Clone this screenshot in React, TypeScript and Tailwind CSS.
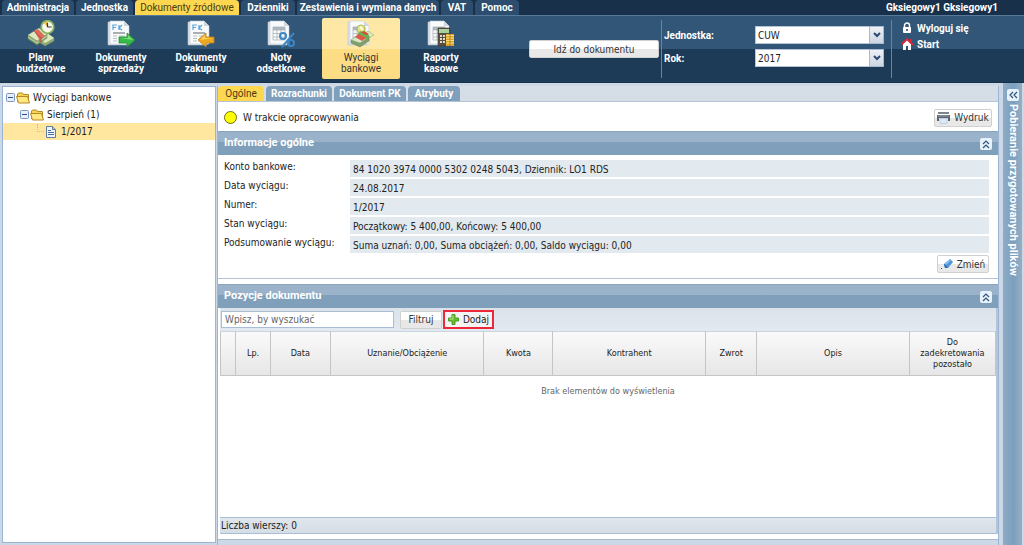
import { useState } from 'react';
import type { ReactNode } from 'react';
import clsx from 'clsx';

const menuItems = [
  { label: 'Administracja', width: 'w-[72px]' },
  { label: 'Jednostka', width: 'w-[57px]' },
  { label: 'Dokumenty źródłowe', width: 'w-[104px]' },
  { label: 'Dzienniki', width: 'w-[54px]' },
  { label: 'Zestawienia i wymiana danych', width: 'w-[142px]' },
  { label: 'VAT', width: 'w-[32px]' },
  { label: 'Pomoc', width: 'w-[44px]' },
];

const tabs = [
  { label: 'Ogólne', width: 'w-[46px]' },
  { label: 'Rozrachunki', width: 'w-[66px]' },
  { label: 'Dokument PK', width: 'w-[72px]' },
  { label: 'Atrybuty', width: 'w-[52px]' },
];

const details = [
  { label: 'Konto bankowe:', value: '84 1020 3974 0000 5302 0248 5043, Dziennik: LO1 RDS' },
  { label: 'Data wyciągu:', value: '24.08.2017' },
  { label: 'Numer:', value: '1/2017' },
  { label: 'Stan wyciągu:', value: 'Początkowy: 5 400,00, Końcowy: 5 400,00' },
  { label: 'Podsumowanie wyciągu:', value: 'Suma uznań: 0,00, Suma obciążeń: 0,00, Saldo wyciągu: 0,00' },
];

const columns = [
  { label: '', width: 'w-[2%]' },
  { label: 'Lp.', width: 'w-[4.4%]' },
  { label: 'Data', width: 'w-[7.8%]' },
  { label: 'Uznanie/Obciążenie', width: 'w-[19.8%]' },
  { label: 'Kwota', width: 'w-[8.9%]' },
  { label: 'Kontrahent', width: 'w-[19.7%]' },
  { label: 'Zwrot', width: 'w-[6.6%]' },
  { label: 'Opis', width: 'w-[19.7%]' },
  { label: 'Do zadekretowania pozostało', width: 'w-[11.1%]' },
];

function Sheet({ fk = false }: { fk?: boolean }) {
  return (
    <g>
      <path d="M1 2h15l4 4v19H1z" fill="#dfe5ea" stroke="#b5c0ca" strokeWidth=".6" />
      <path d="M3 1h14l5 5v18H3z" fill="#f9fafb" stroke="#c3ccd4" strokeWidth=".6" />
      <path d="M17 1v5h5z" fill="#cfd7df" />
      {fk ? (
        <g>
          <path d="M6 10V5h4M6 7.500h3M12 5v5M15 5l-3 3 3 2" fill="none" stroke="#5aa3d8" strokeWidth="1.200" />
          <path d="M6 12h12v2H6z" fill="#a9aeb3" />
          <path d="M6 16h4M6 18.500h4M6 21h4M12 16h6M12 18.500h6M12 21h6" stroke="#b9bfc5" strokeWidth="1" />
        </g>
      ) : (
        <g>
          <path d="M6 7h12v3H6z" fill="#b3bac1" />
          <path d="M6 7h12v13H6zM6 10h12M6 13.500h12M6 17h12M10 7v13M14 7v13" fill="none" stroke="#a4adb6" strokeWidth=".7" />
        </g>
      )}
    </g>
  );
}

function Cash() {
  return (
    <g strokeLinejoin="round">
      <path d="M10 17l10-4 7 5v3l-9 5-8-5z" fill="#8fae75" stroke="#6c8659" strokeWidth=".5" />
      <path d="M10 17l10-4 7 5-9 5z" fill="#dce8bf" />
      <path d="M1 15v4l9 6 10-7v-4l-10 7z" fill="#86a56c" stroke="#637d50" strokeWidth=".5" />
      <path d="M1 15L12 8l8 6-10 7z" fill="#dce9c4" stroke="#92a879" strokeWidth=".5" />
      <path d="M1 17l9 6 10-7" fill="none" stroke="#e3edcf" strokeWidth=".7" />
      <path d="M7 11l4-2 7 7-4 3v3l-2 1v-4z" fill="#dc6b5c" />
      <path d="M7 11l7 7v4" fill="none" stroke="#b34239" strokeWidth=".8" />
    </g>
  );
}

function BudgetIcon() {
  return (
    <svg className="size-7" viewBox="0 0 28 28" aria-hidden="true">
      <Cash />
      <circle cx="20.500" cy="7" r="6.300" fill="#f8f7eb" stroke="#8bb35c" strokeWidth="1.800" />
      <path d="M20.500 7L17 3a5 5 0 0 1 4-1z" fill="#f1b63b" />
      <path d="M20.500 7V3M20.500 7h4" stroke="#343434" strokeWidth="1.200" />
    </svg>
  );
}

function SalesIcon() {
  return (
    <svg className="size-7" viewBox="0 0 28 28" aria-hidden="true">
      <Sheet fk />
      <path d="M12 17h8v-4l8 7-8 7v-4h-8z" fill="#36ba49" stroke="#228f34" strokeWidth=".8" />
      <path d="M13 18h8v-3l5 5z" fill="#7edb79" />
    </svg>
  );
}

function PurchaseIcon() {
  return (
    <svg className="size-7" viewBox="0 0 28 28" aria-hidden="true">
      <Sheet fk />
      <path d="M27 17h-8v-4l-8 7 8 7v-4h8z" fill="#eda821" stroke="#c57f14" strokeWidth=".8" />
      <path d="M26 18h-8v-3l-5 5z" fill="#ffd658" />
    </svg>
  );
}

function InterestIcon() {
  return (
    <svg className="size-7" viewBox="0 0 28 28" aria-hidden="true">
      <Sheet />
      <g fill="none" stroke="#3c86c5" strokeWidth="2">
        <circle cx="16" cy="16" r="3" />
        <circle cx="24" cy="23" r="3" />
        <path d="M27 13L15 27" />
      </g>
    </svg>
  );
}

function StatementIcon() {
  return (
    <svg className="size-7" viewBox="0 0 28 28" aria-hidden="true">
      <Sheet />
      <circle cx="14" cy="9" r="4" fill="#e6e48c" stroke="#b6bb4a" />
      <path d="M14 9V6M14 9h2" stroke="#fff" strokeWidth="1.300" />
      <path d="M13 15l8-4 6 4-8 5z" fill="#d9ebc4" stroke="#8fb577" strokeWidth=".6" />
      <path d="M4 20v3l9 4 9-6v-4l-9 6z" fill="#7f9f6b" stroke="#627d52" strokeWidth=".5" />
      <path d="M4 20l9-6 9 3-9 6z" fill="#dbeac6" stroke="#7f9f6e" strokeWidth=".6" />
      <path d="M10 15l3-4 7 2 3 4-4 2z" fill="#6cb04f" />
      <path d="M8 17l4-3 7 4-4 3z" fill="#df5747" />
      <path d="M14 12l5 3 3-1-5-3z" fill="#da4a38" />
    </svg>
  );
}

function CashReportIcon() {
  return (
    <svg className="size-7" viewBox="0 0 28 28" aria-hidden="true">
      <Sheet />
      <path d="M11 8h12v18H11z" fill="#5a5040" stroke="#3d3931" strokeWidth=".6" />
      <path d="M12 9h10v4H12z" fill="#a8d29b" />
      <path d="M13 15h2v2h-2zM16 15h2v2h-2zM19 15h2v2h-2zM13 18h2v2h-2zM16 18h2v2h-2zM19 18h2v2h-2zM13 21h2v2h-2zM16 21h2v2h-2z" fill="#e3dcc6" />
      <path d="M19 14h8v12h-8z" fill="#dda42b" />
      <path d="M19 15.500h8M19 18h8M19 20.500h8M19 23h8" stroke="#ffe581" strokeWidth="1" />
      <path d="M23 14v12" stroke="#a87413" strokeWidth=".8" />
    </svg>
  );
}

const tools = [
  { label: 'Plany budżetowe', icon: <BudgetIcon /> },
  { label: 'Dokumenty sprzedaży', icon: <SalesIcon /> },
  { label: 'Dokumenty zakupu', icon: <PurchaseIcon /> },
  { label: 'Noty odsetkowe', icon: <InterestIcon /> },
  { label: 'Wyciągi bankowe', icon: <StatementIcon />, active: true },
  { label: 'Raporty kasowe', icon: <CashReportIcon /> },
];

function LockIcon() {
  return (
    <svg className="size-3" viewBox="0 0 12 12" aria-hidden="true">
      <path d="M3.500 6V3.500a2.500 2.500 0 0 1 5 0V6" fill="none" stroke="#fff" strokeWidth="1.500" />
      <rect x="2" y="5" width="8" height="6" rx="1" fill="#fff" />
      <path d="M6 7v2" stroke="#26405c" strokeWidth="1.500" />
    </svg>
  );
}

function HomeIcon() {
  return (
    <svg className="size-3" viewBox="0 0 12 12" aria-hidden="true">
      <path d="M2 6l4-4 4 4v6H7V8H5v4H2z" fill="#fff" />
      <path d="M0 7l6-6 6 6" fill="none" stroke="#dc2738" strokeWidth="1.800" />
      <path d="M9 1h1.500v3H9z" fill="#dc2738" />
    </svg>
  );
}

function FolderIcon() {
  return (
    <svg className="h-3 w-[14px]" viewBox="0 0 14 12" aria-hidden="true">
      <path d="M1.500 10V2l1-1h4l1 1.500h5V10" fill="#f7d253" stroke="#b58a26" />
      <path d="M.5 4.500h11l2 6.500h-11z" fill="#ffe782" stroke="#b58a26" />
    </svg>
  );
}

function FileIcon() {
  return (
    <svg className="h-3 w-[14px]" viewBox="0 0 14 12" aria-hidden="true">
      <path d="M2.500.5h6l3 3v8h-9z" fill="#eef4fb" stroke="#5f7c9e" />
      <path d="M8.500.5v3h3" fill="#a8bfdb" stroke="#5f7c9e" />
      <path d="M4 4.500h3M4 6.500h6M4 8.500h6" stroke="#4a6c98" />
    </svg>
  );
}

function MinusBox() {
  return (
    <svg className="size-[9px]" viewBox="0 0 9 9" aria-hidden="true">
      <rect x=".5" y=".5" width="8" height="8" rx="1" fill="#e8effa" stroke="#7994bd" />
      <path d="M2 4.500h5" stroke="#29508c" />
    </svg>
  );
}

function PrinterIcon() {
  return (
    <svg className="h-3 w-[13px]" viewBox="0 0 13 12" aria-hidden="true">
      <path d="M1 0h11v2H1z" fill="#7c858e" />
      <path d="M0 3h13v6h-2V6H2v3H0z" fill="#5c656e" />
      <path d="M1 4h11" stroke="#9ba3ab" />
      <path d="M3 6.500h7v5H3z" fill="#dce9f7" stroke="#b4c7db" strokeWidth=".7" />
    </svg>
  );
}

function EraserIcon() {
  return (
    <svg className="size-3" viewBox="0 0 12 12" aria-hidden="true">
      <path d="M3 6l6-5 3 3-5 6H4z" fill="#4f95d9" />
      <path d="M3 6l6-5 1 1-5 5z" fill="#90c1ee" />
      <path d="M3 6l1 4h3L4 6z" fill="#2d6fb5" />
      <path d="M0 10h1v1H0z" fill="#444" />
    </svg>
  );
}

function PlusIcon() {
  return (
    <svg className="size-[11px]" viewBox="0 0 11 11" aria-hidden="true">
      <path d="M4 .5h3V4h3.500v3H7v3.500H4V7H.5V4H4z" fill="#68bd32" stroke="#4a9a22" />
      <path d="M5 1.500v3.500H1.500" fill="none" stroke="#b5e487" />
    </svg>
  );
}

function Chevrons({ left = false }: { left?: boolean }) {
  return (
    <svg className="size-[10px]" viewBox="0 0 10 10" aria-hidden="true">
      <path
        d={left ? 'M5 2L2 5l3 3M9 2L6 5l3 3' : 'M2 5l3-3 3 3M2 9l3-3 3 3'}
        fill="none"
        stroke="#31547c"
        strokeWidth="1.200"
      />
    </svg>
  );
}

function Button({ children, className }: { children: ReactNode; className?: string }) {
  return (
    <button
      type="button"
      className={clsx(
        "flex h-[18px] items-center justify-center gap-1 rounded-xs border border-[#d0d0d0] bg-linear-to-b from-white from-50% to-[#e8e8e8] to-50% font-['DejaVu_Sans_Condensed','DejaVu_Sans',sans-serif] text-[10px] whitespace-nowrap text-[#333]",
        className,
      )}
    >
      {children}
    </button>
  );
}

function PanelHeader({ title }: { title: string }) {
  return (
    <div className="flex h-6 shrink-0 items-center justify-between border-t border-[#89a5c0] bg-linear-to-b from-[#9bb3ca] from-45% to-[#809fbb] to-45% pr-1.5 pl-1.5">
      <h2 className="font-['Roboto',sans-serif] text-[11px] font-bold text-white">{title}</h2>
      <button type="button" aria-label={`Zwiń: ${title}`} className="flex size-3 items-center justify-center rounded-xs bg-[#e7f2fc]">
        <Chevrons />
      </button>
    </div>
  );
}

function SelectField({ id, label, value }: { id: string; label: string; value: string }) {
  return (
    <div className="flex h-[18px] items-center">
      <label htmlFor={id} className="w-[91px] font-bold text-white">{label}</label>
      <div className="relative">
        <select
          id={id}
          defaultValue={value}
          className="h-[18px] w-[129px] appearance-none border border-[#b5c5d5] bg-white pl-0.5 font-['DejaVu_Sans_Condensed','DejaVu_Sans',sans-serif] text-[10px] text-[#222]"
        >
          <option>{value}</option>
        </select>
        <span className="pointer-events-none absolute top-0 right-0 flex h-[18px] w-[15px] items-center justify-center border border-[#a7b9d0] bg-linear-to-b from-[#eef1f6] to-[#ccd5e2]">
          <svg className="h-1.5 w-2" viewBox="0 0 8 6" aria-hidden="true">
            <path d="M1 1l3 3 3-3" fill="none" stroke="#2c4a73" strokeWidth="2" />
          </svg>
        </span>
      </div>
    </div>
  );
}

function Header() {
  return (
    <header className="shrink-0 font-['Roboto','Noto_Sans',sans-serif]">
      <div className="flex h-4 items-end justify-between border-b border-[#587a98] bg-[#19304b] pl-0.5">
        <nav className="flex gap-0.5">
          {menuItems.map((item, index) => (
            <button
              key={item.label}
              type="button"
              className={clsx(
                'h-[15px] rounded-t-sm text-center text-[10px] leading-[15px] whitespace-nowrap',
                item.width,
                index === 2 ? 'bg-[#fdd74f] text-[#4a3c13]' : 'bg-[#2c4d6d] font-bold text-white',
              )}
            >
              {item.label}
            </button>
          ))}
        </nav>
        <span className="pr-[26px] text-[10px] leading-[15px] font-bold text-white">Gksiegowy1 Gksiegowy1</span>
      </div>
      <div className="flex h-[67px] border-b border-[#14304b] bg-linear-to-b from-[#315678] from-50% to-[#1d3a57] to-50% pl-px">
        <div className="flex shrink-0 pt-0.5">
          {tools.map((tool) => (
            <button
              key={tool.label}
              type="button"
              className={clsx(
                'mx-px flex h-[61px] w-[78px] flex-col items-center rounded-xs px-2 pt-0.5 text-[10px] leading-[11px]',
                tool.active
                  ? 'bg-linear-to-b from-[#ffe8a5] from-50% to-[#fddd83] to-50% text-[#333]'
                  : 'font-bold text-white',
              )}
            >
              {tool.icon}
              <span className="mt-1 w-14">{tool.label}</span>
            </button>
          ))}
        </div>
        <div className="flex flex-1 justify-end py-1">
          <Button className="mt-5 mr-0.5 w-[130px]">Idź do dokumentu</Button>
          <div className="flex w-[230px] flex-col gap-[5px] border-l border-[#6785a1] pt-1.5 pl-0.5 text-[10px]">
            <SelectField id="unit" label="Jednostka:" value="CUW" />
            <SelectField id="year" label="Rok:" value="2017" />
          </div>
          <div className="flex w-[133px] flex-col border-l border-[#6785a1] pl-[9px] text-[10px] font-bold text-white">
            <a href="#logout" className="flex h-4 items-center gap-1"><LockIcon />Wyloguj się</a>
            <a href="#start" className="flex h-4 items-center gap-1"><HomeIcon />Start</a>
          </div>
        </div>
      </div>
    </header>
  );
}

function Tree() {
  return (
    <aside className="w-[214px] shrink-0 border border-[#99b4d5] bg-white pt-0.5">
      <ul className="leading-[17px] text-[#222]">
        <li>
          <div className="flex h-[17px] items-center gap-px pl-[3px]">
            <MinusBox /><FolderIcon /><span className="pl-0.5">Wyciągi bankowe</span>
          </div>
          <ul>
            <li>
              <div className="flex h-[17px] items-center gap-px pl-[17px]">
                <MinusBox /><FolderIcon /><span className="pl-0.5">Sierpień (1)</span>
              </div>
              <ul>
                <li className="flex h-[17px] items-center bg-[#ffe7a0] pl-[34px]">
                  <span className="mb-2 h-2 w-[7px] border-b border-l border-dotted border-[#c5bda0]" />
                  <FileIcon /><span className="pl-[3px]">1/2017</span>
                </li>
              </ul>
            </li>
          </ul>
        </li>
      </ul>
    </aside>
  );
}

function PositionsTable() {
  return (
    <table className="w-full table-fixed border-collapse text-[9px]">
      <thead>
        <tr className="h-11 bg-linear-to-b from-[#fafafa] to-[#e6e6e6]">
          {columns.map((column) => (
            <th key={column.label} className={clsx('border border-t-[#ccd5df] border-[#c5c5c5] px-1 leading-[11px] font-normal', column.width)}>
              {column.label}
            </th>
          ))}
        </tr>
      </thead>
      <tbody>
        <tr>
          <td colSpan={columns.length} className="h-8 text-center text-[#666]">Brak elementów do wyświetlenia</td>
        </tr>
      </tbody>
    </table>
  );
}

export default function App() {
  const [tab, setTab] = useState(0);

  return (
    <div className="flex h-screen flex-col overflow-hidden bg-[#cdd8e7] font-['DejaVu_Sans_Condensed','DejaVu_Sans',sans-serif] text-[10px] text-[#222]">
      <Header />
      <div className="flex min-h-0 flex-1 pt-[3px]">
        <div className="flex pb-0.5 pl-0.5">
          <Tree />
        </div>
        <main className="mr-1 ml-px flex min-w-0 flex-1 flex-col border-x border-[#99b4d5]">
          <div className="flex h-4 shrink-0 gap-0.5 border-b border-[#b5c5d5] bg-[#d5dde7]">
            {tabs.map((item, index) => (
              <button
                key={item.label}
                type="button"
                onClick={() => setTab(index)}
                className={clsx(
                  "h-[15px] rounded-t-sm font-['Roboto',sans-serif] leading-[15px] whitespace-nowrap",
                  item.width,
                  tab === index ? 'bg-[#fdd74f] text-[#4a3c13]' : 'bg-[#7f9fbc] font-bold text-white',
                )}
              >
                {item.label}
              </button>
            ))}
          </div>
          <div className="flex h-[29px] shrink-0 items-center bg-white px-1.5 pt-0.5">
            <span className="size-[13px] rounded-full border border-[#6b6b18] bg-[#ffff00]" />
            <span className="flex-1 pl-1.5">W trakcie opracowywania</span>
            <Button className="w-[58px]"><PrinterIcon />Wydruk</Button>
          </div>
          <PanelHeader title="Informacje ogólne" />
          <section className="shrink-0 border-b border-[#b5c5d5] bg-white pt-[5px] pr-[9px] pb-[5px] pl-1.5">
            <dl className="flex flex-col gap-0.5">
              {details.map((row) => (
                <div key={row.label} className="flex h-[17px]">
                  <dt className="w-[126px] shrink-0 leading-[14px]">{row.label}</dt>
                  <dd className="flex-1 bg-[#e2e9ef] pl-[3px] leading-[19px]">{row.value}</dd>
                </div>
              ))}
            </dl>
            <div className="flex justify-end pt-0.5">
              <Button className="w-[52px]"><EraserIcon />Zmień</Button>
            </div>
          </section>
          <div className="h-[5px] shrink-0 bg-white" />
          <PanelHeader title="Pozycje dokumentu" />
          <section className="flex min-h-0 flex-1 flex-col border-x-2 border-l-white border-r-[#b5c5d5] bg-white">
            <div className="flex h-[23px] shrink-0 items-center bg-linear-to-b from-[#dce2e9] to-[#e3e9f0] pl-px">
              <input
                type="text"
                aria-label="Wpisz, by wyszukać"
                placeholder="Wpisz, by wyszukać"
                className="h-[17px] w-[173px] border border-[#a9bdd5] bg-white pl-[3px] placeholder:text-[#666]"
              />
              <Button className="ml-1.5 w-[42px]">Filtruj</Button>
              <button type="button" className="ml-px flex h-[19px] w-[51px] items-center justify-center gap-1 border-2 border-[#ed2939] bg-[#f4f4f4]">
                <PlusIcon />Dodaj
              </button>
            </div>
            <div className="min-h-0 flex-1">
              <PositionsTable />
            </div>
            <footer className="h-[17px] shrink-0 border-y border-[#a9bdd5] bg-linear-to-b from-[#dfe6ed] to-[#d5dde5] pl-px leading-4">Liczba wierszy: 0</footer>
          </section>
          <div className="h-1.5 shrink-0 border-b border-[#a9b9cc] bg-white" />
          <div className="h-[5px] shrink-0" />
        </main>
        <aside className="-mt-[3px] mr-0.5 flex w-[19px] shrink-0 flex-col items-center gap-[3px] bg-linear-to-r from-[#8eabc6] via-[#7d9fbe] via-55% to-[#94afc4] pt-1.5">
          <button type="button" aria-label="Rozwiń" className="flex size-3 items-center justify-center rounded-xs bg-[#e7f2fc]">
            <Chevrons left />
          </button>
          <h2 className="font-['Roboto',sans-serif] text-[11px] leading-3 font-bold whitespace-nowrap text-white [writing-mode:vertical-rl]">
            Pobieranie przygotowanych plików
          </h2>
        </aside>
      </div>
    </div>
  );
}
